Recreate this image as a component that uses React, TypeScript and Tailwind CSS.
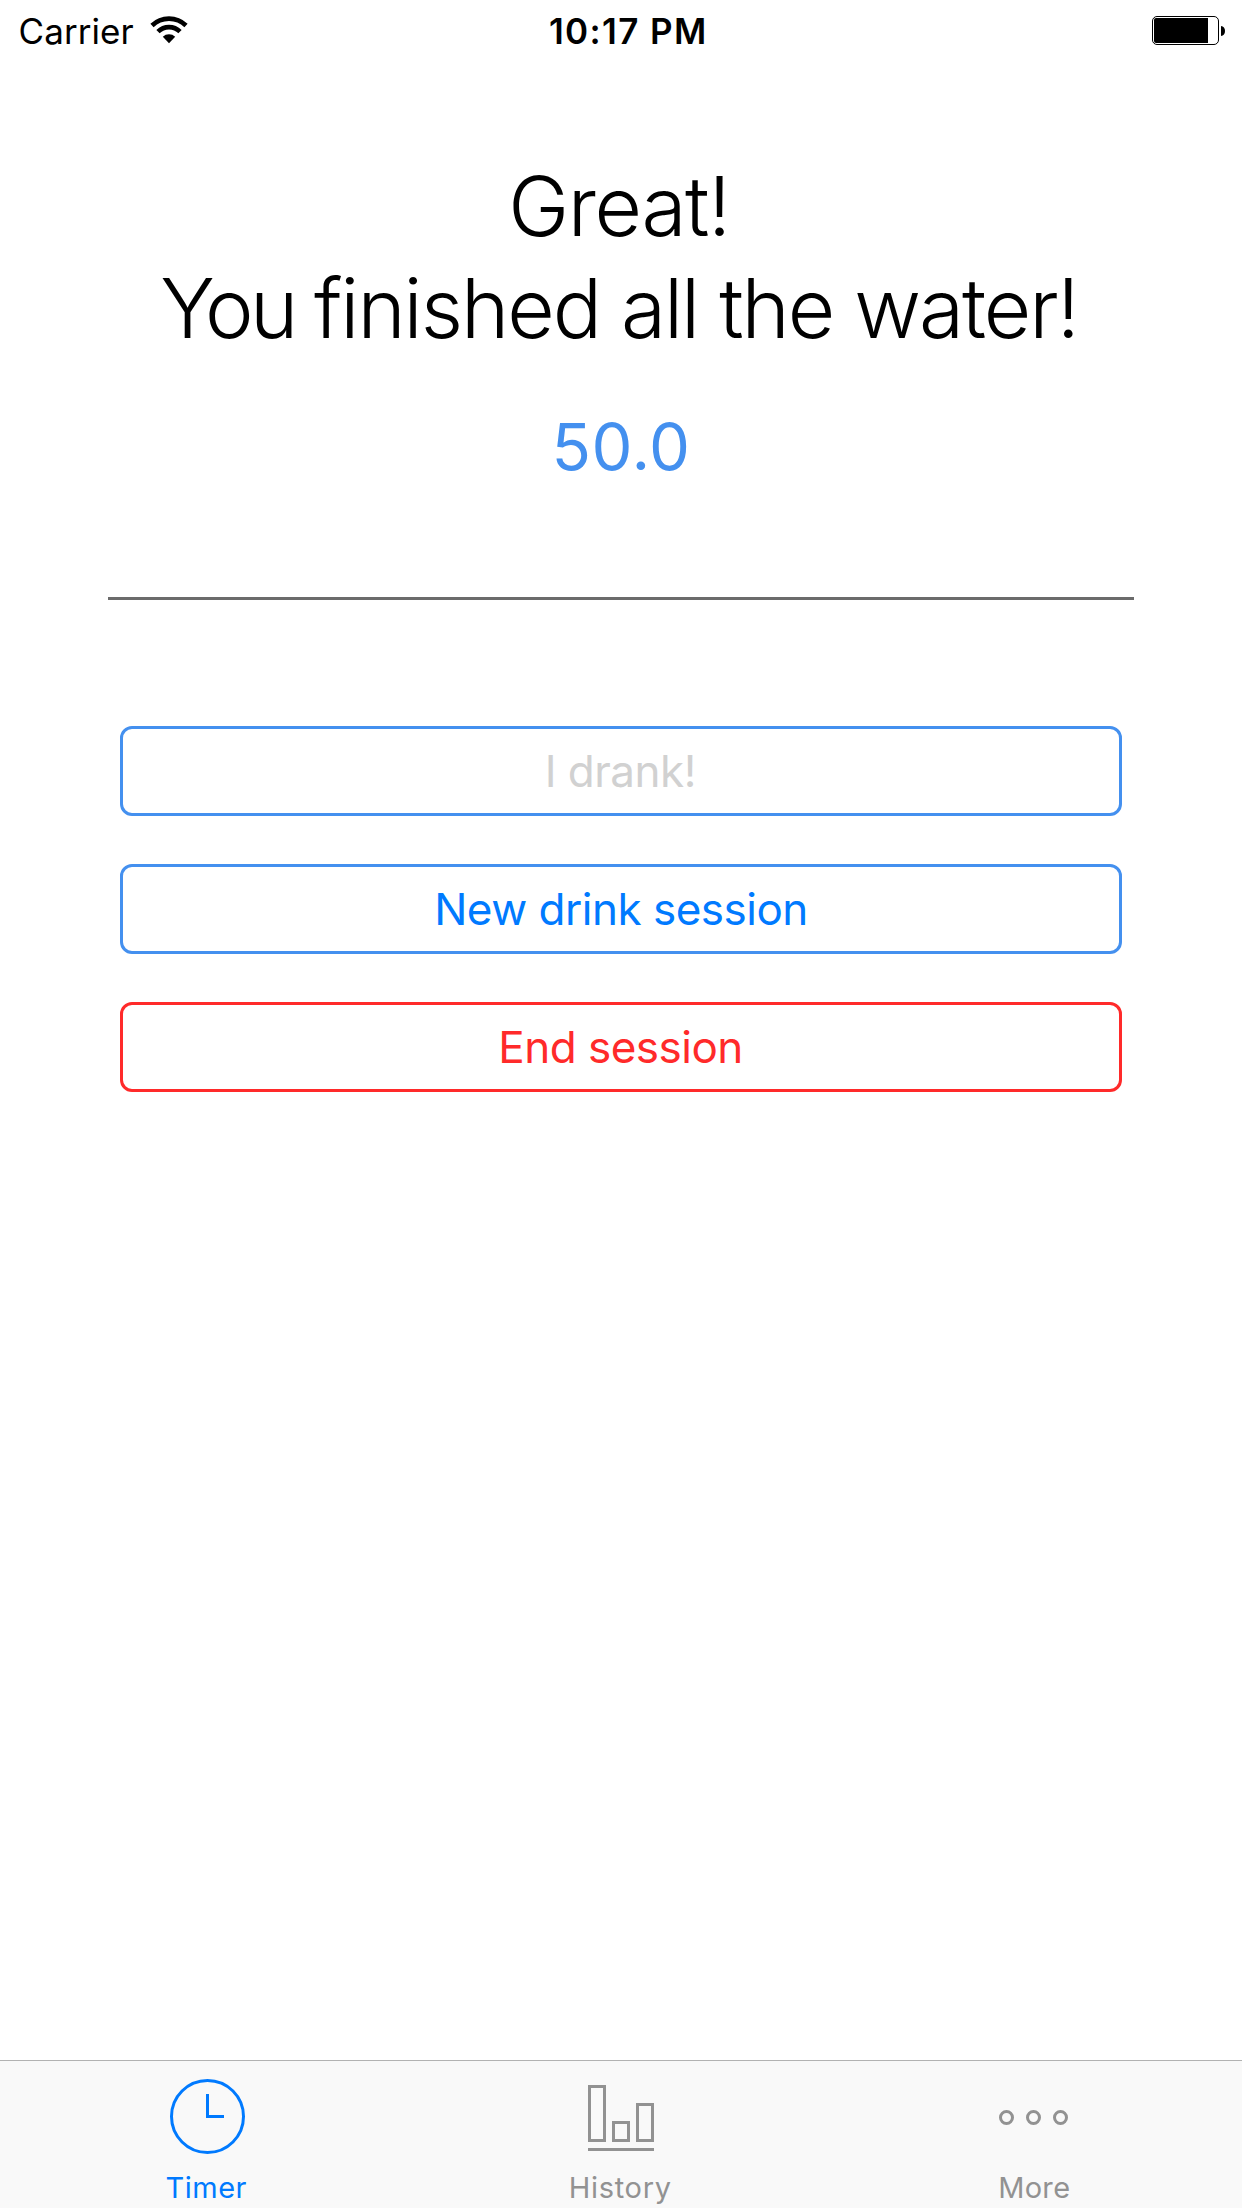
import type { ReactNode } from "react";

function WifiIcon() {
  return (
    <svg className="h-[30px] w-[40px]" viewBox="0 0 40 30" fill="none" stroke="#000" strokeWidth="4.6">
      <path d="M3 10.5A24.4 24.4 0 0 1 37 10.5" />
      <path d="M9 16.7A15.6 15.6 0 0 1 31 16.7" />
      <path d="M20 28.2L13.8 21.8A9 9 0 0 1 26.2 21.8Z" fill="#000" stroke="none" />
    </svg>
  );
}

function BatteryIcon() {
  return (
    <svg className="h-[29px] w-[73px]" viewBox="0 0 73 29">
      <rect x="0.5" y="0.5" width="66" height="28" rx="4.5" fill="none" stroke="#000" />
      <path d="M4 2H56V27H4A2 2 0 0 1 2 25V4A2 2 0 0 1 4 2Z" fill="#000" />
      <path d="M69 10C71.5 10 73 12.2 73 15S71.5 20 69 20Z" fill="#000" />
    </svg>
  );
}

function StatusBar() {
  return (
    <header className="flex h-[62px] items-center justify-between pr-[17px] pl-[18.5px] text-[35px] leading-[62px]">
      <div className="flex w-[400px] items-center">
        <span className="tracking-[0.08px]">Carrier</span>
        <span className="ml-[15px] pb-[2px]">
          <WifiIcon />
        </span>
      </div>
      <span className="pl-[13px] font-semibold tracking-[1.37px]">10:17 PM</span>
      <div className="flex w-[400px] justify-end pb-px">
        <BatteryIcon />
      </div>
    </header>
  );
}

function ActionButton({ className, disabled, children }: { className: string; disabled?: boolean; children: ReactNode }) {
  return (
    <button
      disabled={disabled}
      className={`flex h-[90px] w-full items-center justify-center rounded-xl border-3 text-[44px] leading-[84px] tracking-[-0.5px] ${className}`}
    >
      {children}
    </button>
  );
}

function TimerIcon() {
  return (
    <svg className="size-[90px]" viewBox="0 0 90 90" fill="none" stroke="currentColor" strokeWidth="3">
      <circle cx="45.5" cy="46.5" r="36" />
      <path d="M45.5 24V46.5H62" />
    </svg>
  );
}

function HistoryIcon() {
  return (
    <svg className="size-[90px]" viewBox="0 0 90 90" fill="none" stroke="currentColor" strokeWidth="3">
      <rect x="13.5" y="16.5" width="15" height="54" />
      <rect x="37.5" y="52.5" width="15" height="18" />
      <rect x="61.5" y="34.5" width="15" height="36" />
      <path d="M12 79.5H78" />
    </svg>
  );
}

function MoreIcon() {
  return (
    <svg className="size-[90px]" viewBox="0 0 90 90" fill="none" stroke="currentColor" strokeWidth="3">
      <circle cx="16.5" cy="47.5" r="6" />
      <circle cx="43.5" cy="47.5" r="6" />
      <circle cx="70.5" cy="47.5" r="6" />
    </svg>
  );
}

function Tab({ icon, className, children }: { icon: ReactNode; className: string; children: ReactNode }) {
  return (
    <button className={`flex flex-col items-center pt-[9px] ${className}`}>
      {icon}
      <span className="mt-[10px] pr-[1.5px] text-[29px] leading-9">{children}</span>
    </button>
  );
}

export default function App() {
  return (
    <div className="flex h-[2208px] w-[1242px] flex-col bg-white font-['Inter',sans-serif] text-black">
      <StatusBar />
      <main className="flex flex-1 flex-col px-[108px] pt-[94px]">
        <h1 className="flex flex-col items-center pr-[4px] text-[82px] leading-[102px] font-light whitespace-nowrap">
          <span className="tracking-[-1.4px]">Great!</span>
          <span className="tracking-[-2.05px]">
            <span className="tracking-[-3.6px]">You </span>finished all the water!
          </span>
        </h1>
        <p className="mt-[47px] text-center text-[65px] leading-20 tracking-[0.5px] text-[#4490ef]">50.0</p>
        <hr className="mt-[110px] h-[3px] border-0 bg-[#6b6b6b]" />
        <div className="mt-[126px] flex flex-col gap-12 px-3">
          <ActionButton disabled className="border-[#4490ef] pr-[1.5px] text-[#d1d1d1]">I drank!</ActionButton>
          <ActionButton className="border-[#4490ef] text-[#007aff]">New drink session</ActionButton>
          <ActionButton className="border-[#ff2a2a] pr-px text-[#ff2a2a]">End session</ActionButton>
        </div>
      </main>
      <nav className="grid h-[148px] grid-cols-3 border-t border-[#b2b2b2] bg-[#f9f9f9]">
        <Tab icon={<TimerIcon />} className="tracking-[0.49px] text-[#007aff]">Timer</Tab>
        <Tab icon={<HistoryIcon />} className="tracking-[0.69px] text-[#929292]">History</Tab>
        <Tab icon={<MoreIcon />} className="tracking-[0.33px] text-[#929292]">More</Tab>
      </nav>
    </div>
  );
}
